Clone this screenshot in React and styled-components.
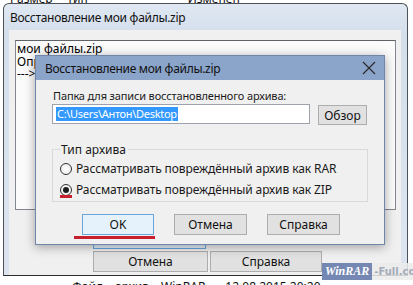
import React from 'react'
import styled, { createGlobalStyle } from 'styled-components'

const GlobalStyle = createGlobalStyle`
  html, body {
    margin: 0;
    padding: 0;
  }
  body {
    width: 413px;
    height: 285px;
    overflow: hidden;
    background: #fff;
    font-family: "Noto Sans", "Open Sans", sans-serif;
    font-size: 12px;
    color: #000;
  }
`;

const Screen = styled.div`
  position: relative;
  width: 413px;
  height: 285px;
  overflow: hidden;
  background: #fff;
  display: flex;
  flex-direction: column;
`;

/* strips of the list view that peek out above and below the window */
const Peek = styled.div`
  height: ${({ $h }) => $h}px;
  overflow: hidden;
  flex: none;
  display: flex;
  align-items: ${({ $top }) => ($top ? 'flex-end' : 'flex-start')};
  padding-left: ${({ $pl }) => $pl}px;
  gap: ${({ $gap }) => $gap}px;
  font-size: 12px;
  line-height: 14px;
  color: #111;
  white-space: nowrap;
`;

const PeekText = styled.span`
  flex: none;
  margin-bottom: ${({ $top }) => ($top ? -3 : 0)}px;
  margin-top: ${({ $top }) => ($top ? 0 : 4)}px;
  margin-left: ${({ $ml }) => $ml || 0}px;
`;

const Window = styled.div`
  flex: none;
  height: 271px;
  margin: 0 5px 0 3px;
  border: 1px solid #4d5259;
  border-bottom: 1px solid #2d2d2d;
  border-radius: 6px 6px 0 0;
  background: linear-gradient(#dfe8f2, #d4dfec 30px, #dce5ef);
  display: flex;
  flex-direction: column;
`;

const TitleBar = styled.div`
  height: 26px;
  flex: none;
  display: flex;
  align-items: center;
  padding-left: 6px;
  font-size: 12px;
  letter-spacing: -0.3px;
  color: #111;
`;

const WindowBody = styled.div`
  flex: 1;
  margin: 0 6px 0 5px;
  background: #f0f0f0;
  padding: 10px 5px 0 6px;
  display: flex;
  flex-direction: column;
`;

const Log = styled.div`
  height: 170px;
  flex: none;
  box-sizing: border-box;
  border: 1px solid #828790;
  border-top-color: #5f6368;
  background: #fbfbfb;
  padding: 2px 1px;
  font-size: 12px;
  line-height: 12.5px;
  white-space: nowrap;
  overflow: hidden;
`;

const ButtonRow = styled.div`
  display: flex;
  gap: ${({ $gap }) => $gap || 0}px;
  padding-left: ${({ $pl }) => $pl}px;
  margin-top: ${({ $mt }) => $mt}px;
  flex: none;
`;

const Button = styled.div`
  box-sizing: border-box;
  width: ${({ $w }) => $w}px;
  height: ${({ $h }) => $h || 21}px;
  margin-top: ${({ $mt }) => $mt || 0}px;
  flex: none;
  display: flex;
  align-items: center;
  justify-content: center;
  background: ${({ $primary }) => ($primary ? '#e5f1fb' : '#e1e1e1')};
  border: 1px solid ${({ $primary }) => ($primary ? '#6aa6dc' : '#adadad')};
  font-size: 12px;
  color: #111;
`;

const Dialog = styled.div`
  position: absolute;
  left: 35px;
  top: 55px;
  width: 350px;
  height: 190px;
  box-sizing: border-box;
  border: 1px solid #6f86a8;
  background: #f0f0f0;
  box-shadow: 0 2px 10px rgba(0, 0, 0, 0.35);
  display: flex;
  flex-direction: column;
`;

const DialogTitle = styled.div`
  height: 24px;
  flex: none;
  background: #8ba4c9;
  display: flex;
  align-items: center;
  justify-content: space-between;
  padding: 0 8px 0 9px;
  font-size: 12px;
  letter-spacing: -0.3px;
  color: #111;
`;

const DialogBody = styled.div`
  flex: 1;
  padding: 8px 17px 0 16px;
  display: flex;
  flex-direction: column;
  position: relative;
`;

const Label = styled.div`
  font-size: 11px;
  letter-spacing: -0.15px;
  line-height: 15px;
  color: #1a1a1a;
  padding-left: 1px;
`;

const PathRow = styled.div`
  display: flex;
  align-items: flex-start;
  gap: 8px;
  margin-top: 1px;
`;

const Input = styled.div`
  box-sizing: border-box;
  width: 258px;
  height: 20px;
  border: 1px solid #9ea3ab;
  background: #fff;
  display: flex;
  align-items: center;
  padding-left: 3px;
`;

const Selected = styled.span`
  background: #3399ff;
  color: #fff;
  font-size: 11px;
  letter-spacing: -0.3px;
  line-height: 14px;
  padding: 0 1px;
`;

const Group = styled.fieldset`
  margin: 17px 0 0 0;
  width: 316px;
  box-sizing: border-box;
  border: 1px solid #d9d9d9;
  padding: 4px 0 4px 7px;
  display: flex;
  flex-direction: column;
  gap: 6px;
`;

const Legend = styled.legend`
  font-size: 12px;
  line-height: 15px;
  padding: 0 2px 0 1px;
  color: #1a1a1a;
`;

const RadioRow = styled.div`
  display: flex;
  align-items: center;
  gap: 4px;
  height: 15px;
  font-size: 12px;
  letter-spacing: -0.1px;
  color: #1a1a1a;
`;

const Radio = styled.span`
  width: 12px;
  height: 12px;
  flex: none;
  box-sizing: border-box;
  border-radius: 50%;
  border: 1px solid #333;
  background: radial-gradient(#fff, #eaeaea);
  display: flex;
  align-items: center;
  justify-content: center;
  &::after {
    content: '';
    width: 6px;
    height: 6px;
    border-radius: 50%;
    background: ${({ $checked }) => ($checked ? '#1b1b1b' : 'transparent')};
  }
`;

/* red annotation strokes drawn over the screenshot */
const Mark = styled.div`
  position: absolute;
  left: ${({ $x }) => $x}px;
  top: ${({ $y }) => $y}px;
  width: ${({ $w }) => $w}px;
  height: 3px;
  background: #c81f2e;
`;

const Watermark = styled.div`
  position: absolute;
  left: 322px;
  top: 263px;
  height: 17px;
  display: flex;
  align-items: stretch;
`;

const WmBrand = styled.span`
  background: #7587b3;
  color: #fff;
  font-family: "Liberation Serif", serif;
  font-style: italic;
  font-weight: bold;
  font-size: 12px;
  padding: 0 3px;
  display: flex;
  align-items: center;
`;

const WmSite = styled.span`
  background: rgba(235, 235, 235, 0.85);
  color: #a3acba;
  font-family: "DejaVu Sans", sans-serif;
  font-weight: bold;
  font-size: 10px;
  padding-left: 2px;
  display: flex;
  align-items: center;
  white-space: nowrap;
`;

const CloseIcon = () => (
  <svg width="14" height="14" viewBox="0 0 14 14">
    <path d="M1 1L13 13M13 1L1 13" stroke="#2b2b2b" strokeWidth="1.2" fill="none" />
  </svg>
);

export default function App() {
  return (
    <>
      <GlobalStyle />
      <Screen>
        <Peek $h={3} $pl={10} $gap={14} $top>
          <PeekText $top>Размер</PeekText>
          <PeekText $top>Тип</PeekText>
          <PeekText $top $ml={86}>Изменён</PeekText>
        </Peek>

        <Window>
          <TitleBar>Восстановление мои файлы.zip</TitleBar>
          <WindowBody>
            <Log>
              мои файлы.zip<br />
              Определение формата архива<br />
              ---&gt; Восстановление архива
            </Log>
            <ButtonRow $pl={78} $mt={16}>
              <Button $w={113} $h={23} $primary>Фоновый режим</Button>
            </ButtonRow>
            <ButtonRow $pl={78} $gap={2} $mt={2}>
              <Button $w={115}>Отмена</Button>
              <Button $w={112}>Справка</Button>
            </ButtonRow>
          </WindowBody>
        </Window>

        <Peek $h={9} $pl={72} $gap={12}>
          <PeekText>Файл</PeekText>
          <PeekText>архив</PeekText>
          <PeekText>WinRAR</PeekText>
          <PeekText $ml={8}>12.08.2015 20:20</PeekText>
        </Peek>

        <Watermark>
          <WmBrand>WinRAR</WmBrand>
          <WmSite>-Full.com</WmSite>
        </Watermark>

        <Dialog>
          <DialogTitle>
            Восстановление мои файлы.zip
            <CloseIcon />
          </DialogTitle>
          <DialogBody>
            <Label>Папка для записи восстановленного архива:</Label>
            <PathRow>
              <Input>
                <Selected>C:\Users\Антон\Desktop</Selected>
              </Input>
              <Button $w={49} $h={20} $mt={1}>Обзор</Button>
            </PathRow>
            <Group>
              <Legend>Тип архива</Legend>
              <RadioRow>
                <Radio />
                Рассматривать повреждённый архив как RAR
              </RadioRow>
              <RadioRow>
                <Radio $checked />
                Рассматривать повреждённый архив как ZIP
              </RadioRow>
            </Group>
            <ButtonRow $pl={30} $gap={20} $mt={12}>
              <Button $w={72} $primary>OK</Button>
              <Button $w={73}>Отмена</Button>
              <Button $w={73}>Справка</Button>
            </ButtonRow>
            <Mark $x={24} $y={115} $w={12} />
            <Mark $x={38} $y={156} $w={81} />
          </DialogBody>
        </Dialog>
      </Screen>
    </>
  );
}
